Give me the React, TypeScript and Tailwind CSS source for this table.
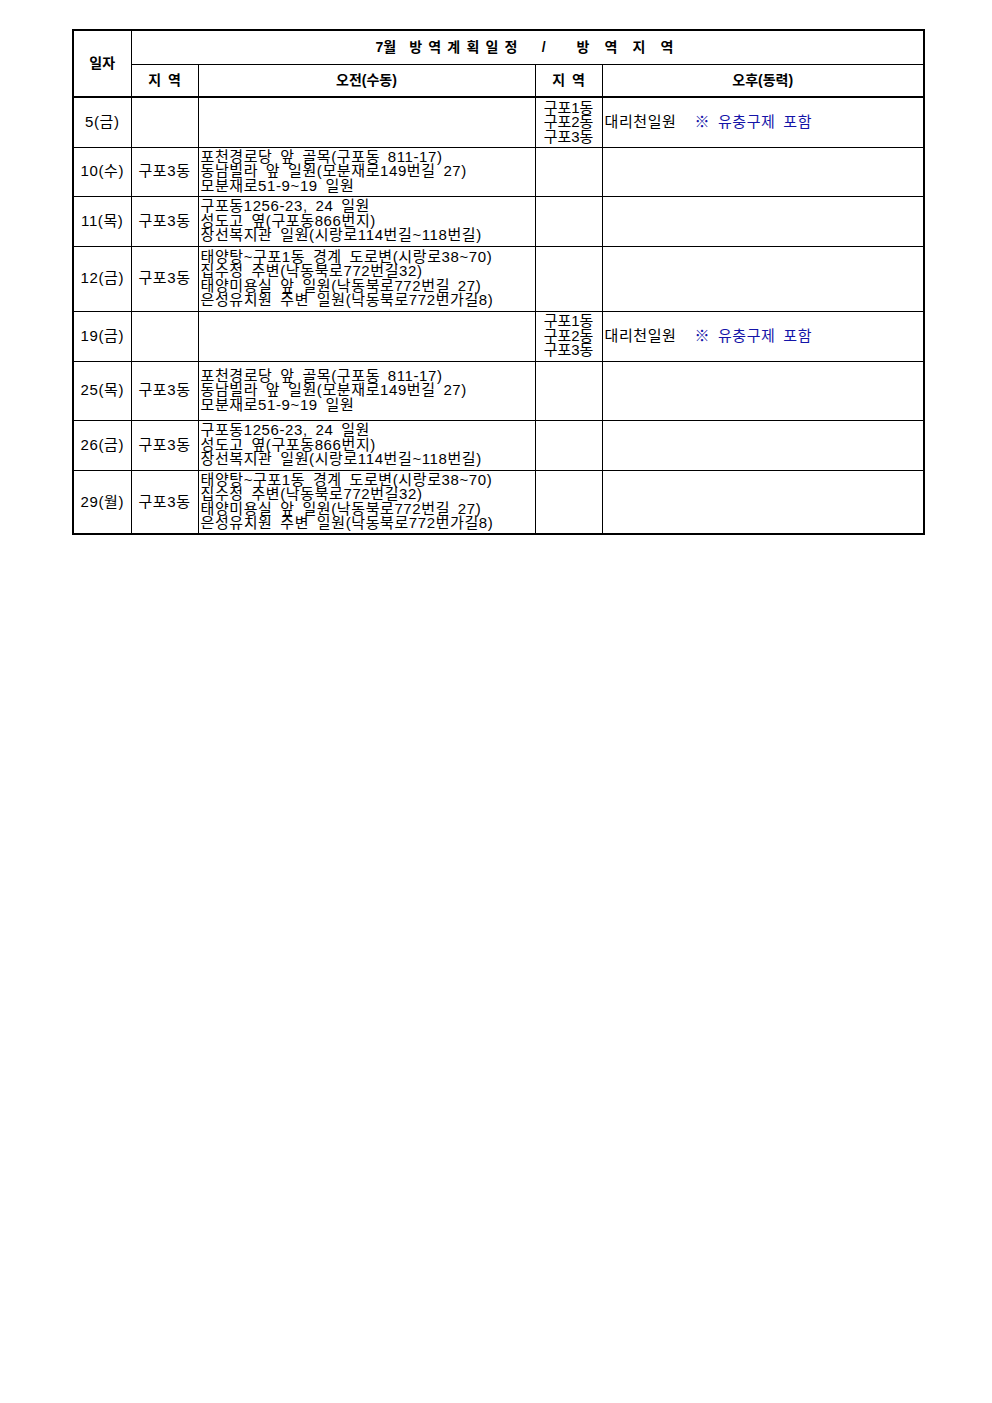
import React from "react"

type Row = {
  date: string
  h: number
  amArea?: string
  am?: string[]
  pmArea?: string[]
  pm?: boolean
}

const listA = ["포천경로당 앞 골목(구포동 811-17)", "동남빌라 앞 일원(모분재로149번길 27)", "모분재로51-9~19 일원"]
const listB = ["구포동1256-23, 24 일원", "성도고 옆(구포동866번지)", "장선복지관 일원(시랑로114번길~118번길)"]
const listC = [
  "태양탕~구포1동 경계 도로변(시랑로38~70)",
  "집수정 주변(낙동북로772번길32)",
  "태양미용실 앞 일원(낙동북로772번길 27)",
  "은성유치원 주변 일원(낙동북로772번가길8)",
]
const areas = ["구포1동", "구포2동", "구포3동"]

const rows: Row[] = [
  { date: "5(금)", h: 50, pmArea: areas, pm: true },
  { date: "10(수)", h: 49, amArea: "구포3동", am: listA },
  { date: "11(목)", h: 50, amArea: "구포3동", am: listB },
  { date: "12(금)", h: 65, amArea: "구포3동", am: listC },
  { date: "19(금)", h: 50, pmArea: areas, pm: true },
  { date: "25(목)", h: 59, amArea: "구포3동", am: listA },
  { date: "26(금)", h: 50, amArea: "구포3동", am: listB },
  { date: "29(월)", h: 64, amArea: "구포3동", am: listC },
]

const cell = "border border-black align-middle p-0"
const head = `${cell} text-[14px] font-bold tracking-normal`

export default function App() {
  return (
    <div
      className="min-h-[1403px] bg-white pt-[29px] pl-[72px] text-black"
      style={{ fontFamily: '"Liberation Sans", "Noto Sans CJK KR", sans-serif' }}
    >
      <table className="w-[851px] table-fixed border-collapse border-2 border-black text-[15px] leading-[14.5px] tracking-[0.6px] [word-spacing:3px]">
        <colgroup>
          <col className="w-[58px]" />
          <col className="w-[67px]" />
          <col className="w-[337px]" />
          <col className="w-[67px]" />
          <col className="w-[322px]" />
        </colgroup>
        <thead>
          <tr className="h-[34px]">
            <th rowSpan={2} className={`${head} border-b-2`}>
              일자
            </th>
            <th colSpan={4} className={head}>
              <div className="flex items-center justify-center whitespace-pre [word-spacing:0px]">
                <span>7월</span>
                <span className="ml-[13px] tracking-[6.2px]">방역계획일정</span>
                <span className="ml-[18px]">/</span>
                <span className="ml-[31px] tracking-[5.6px]">방 역 지 역</span>
              </div>
            </th>
          </tr>
          <tr className="h-[33px]">
            <th className={`${head} border-b-2 whitespace-pre`}>지 역</th>
            <th className={`${head} border-b-2 [word-spacing:0px]`}>오전(수동)</th>
            <th className={`${head} border-b-2 whitespace-pre`}>지 역</th>
            <th className={`${head} border-b-2 [word-spacing:0px]`}>오후(동력)</th>
          </tr>
        </thead>
        <tbody>
          {rows.map((r, i) => (
            <tr key={i} style={{ height: r.h }}>
              <td className={`${cell} text-center`}>{r.date}</td>
              <td className={`${cell} text-center`}>{r.amArea}</td>
              <td className={`${cell} pl-[2px]`}>
                {r.am?.map((line, j) => (
                  <div key={j} className="whitespace-nowrap">
                    {line}
                  </div>
                ))}
              </td>
              <td className={`${cell} text-center tracking-normal`}>
                {r.pmArea?.map((a, j) => (
                  <div key={j}>{a}</div>
                ))}
              </td>
              <td className={`${cell} pl-[2px]`}>
                {r.pm && (
                  <div className="whitespace-nowrap">
                    대리천일원
                    <span className="ml-[18px] text-[#1414a8]">※ 유충구제 포함</span>
                  </div>
                )}
              </td>
            </tr>
          ))}
        </tbody>
      </table>
    </div>
  )
}
